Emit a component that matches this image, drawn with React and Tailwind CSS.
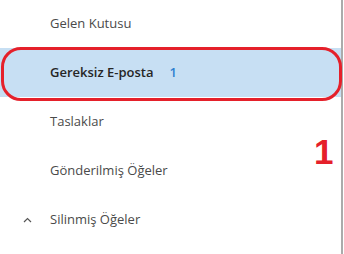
import React from "react";

function Row({ children, active, chevron }) {
  return (
    <div className={`relative flex h-[49px] items-center ${active ? "bg-[#c7dff3]" : ""}`}>
      {chevron && (
        <svg className="absolute left-[23px] top-[22px]" width="9" height="6" viewBox="0 0 9 6" fill="none">
          <path d="M1 5 L4.5 1.5 L8 5" stroke="#555" strokeWidth="1.2" />
        </svg>
      )}
      <div className="pl-[50px] flex items-center">{children}</div>
    </div>
  );
}

export default function App() {
  return (
    <div
      className="relative flex h-[254px] w-[344px] overflow-hidden bg-white"
      style={{ fontFamily: '"Open Sans", "Noto Sans", sans-serif' }}
    >
      <div className="flex-1 border-r-2 border-[#ababab] mr-[1px]">
        <div className="-mt-[1px] flex flex-col text-[13px] text-[#4a4a4a]">
          <Row>Gelen Kutusu</Row>
          <Row active>
            <span className="font-semibold text-[#262626]">Gereksiz E-posta</span>
            <span className="ml-[16px] font-semibold text-[#2f7fd0]">1</span>
          </Row>
          <Row>Taslaklar</Row>
          <Row>Gönderilmiş Öğeler</Row>
          <Row chevron>Silinmiş Öğeler</Row>
        </div>
      </div>
      <div className="pointer-events-none absolute left-[1px] top-[47px] h-[54px] w-[341px] rounded-[20px] border-[3px] border-[#e5202a]"></div>
      <div
        className="pointer-events-none absolute left-[314px] top-[134px] text-[35px] font-bold leading-none text-[#e5202a]"
        style={{ fontFamily: '"Liberation Sans", Arial, sans-serif' }}
      >
        1
      </div>
    </div>
  );
}
